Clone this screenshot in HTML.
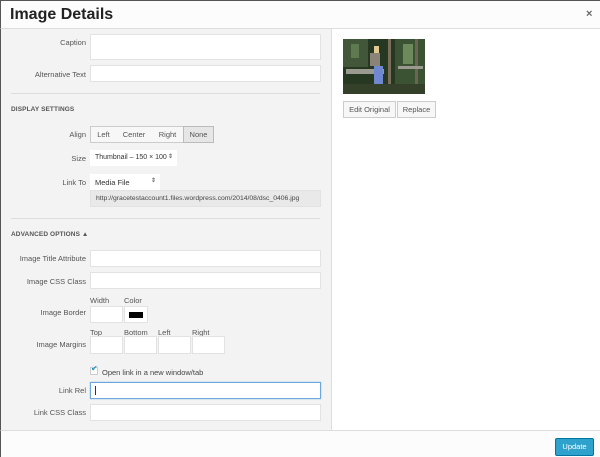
<!DOCTYPE html>
<html><head><style>
*{box-sizing:border-box;margin:0;padding:0}
body{width:600px;height:457px;overflow:hidden;font-family:"Liberation Sans",sans-serif;font-size:7.5px;color:#444;background:#fff;position:relative}
.a{position:absolute}
.hdr{left:0;top:0;width:600px;height:29px;background:#fcfcfc;border-bottom:1px solid #ddd;border-top:1px solid #555;border-left:1px solid #555}
.hdr h1{position:absolute;left:9px;top:5px;font-size:16px;font-weight:bold;color:#222}
.left{left:0;top:29px;width:332px;height:401px;background:#f3f3f3;border-right:1px solid #ddd;border-left:1px solid #555}
.lbl{position:absolute;right:514px;text-align:right;white-space:nowrap;color:#555}
.in{position:absolute;background:#fff;border:1px solid #e2e2e2;white-space:nowrap}
.hr{position:absolute;left:11px;width:309px;height:1px;background:#ddd}
.sec{position:absolute;left:11px;font-size:6.5px;font-weight:bold;color:#555;letter-spacing:.1px}
.btn{position:absolute;background:#f7f7f7;border:1px solid #ccc;text-align:center;line-height:15px;color:#555}
.sm{position:absolute;color:#555}
.foot{left:0;top:430px;width:600px;height:27px;background:#fcfcfc;border-top:1px solid #ddd;border-left:1px solid #555}
</style></head><body>
<div class="a hdr"><h1>Image Details</h1><div style="position:absolute;left:585px;top:7px;font-size:11px;font-weight:bold;color:#666">×</div></div>
<div class="a left"></div>

<div class="lbl" style="top:38px">Caption</div>
<div class="in" style="left:90px;top:34px;width:231px;height:26px"></div>
<div class="lbl" style="top:70px">Alternative Text</div>
<div class="in" style="left:90px;top:65px;width:231px;height:17px"></div>
<div class="hr" style="top:93px"></div>
<div class="sec" style="top:106px">DISPLAY SETTINGS</div>

<div class="lbl" style="top:130px">Align</div>
<div class="btn" style="left:90px;top:126px;width:27px;height:17px">Left</div>
<div class="btn" style="left:116px;top:126px;width:37px;height:17px;border-left:none">Center</div>
<div class="btn" style="left:152px;top:126px;width:32px;height:17px;border-left:none">Right</div>
<div class="btn" style="left:183px;top:126px;width:31px;height:17px;background:#e6e6e6;border-color:#bbb">None</div>

<div class="lbl" style="top:154px">Size</div>
<div class="in" style="left:90px;top:150px;width:87px;height:16px;border:none;padding:4px 5px;color:#333;font-size:7px">Thumbnail – 150 × 100<span style="position:absolute;right:4px;top:3px;font-size:6px">⇕</span></div>
<div class="lbl" style="top:178px">Link To</div>
<div class="in" style="left:90px;top:174px;width:70px;height:16px;border:none;padding:4px 5px;color:#333">Media File<span style="position:absolute;right:4px;top:3px;font-size:6px">⇕</span></div>
<div class="in" style="left:90px;top:190px;width:231px;height:17px;background:#e9e9e9;padding:4px 5px;color:#444;font-size:6.8px">http://gracetestaccount1.files.wordpress.com/2014/08/dsc_0406.jpg</div>
<div class="hr" style="top:218px"></div>

<div class="sec" style="top:231px">ADVANCED OPTIONS ▲</div>
<div class="lbl" style="top:254px">Image Title Attribute</div>
<div class="in" style="left:90px;top:250px;width:231px;height:17px"></div>
<div class="lbl" style="top:277px">Image CSS Class</div>
<div class="in" style="left:90px;top:272px;width:231px;height:17px"></div>
<div class="sm" style="left:90px;top:296px">Width</div>
<div class="sm" style="left:124px;top:296px">Color</div>
<div class="lbl" style="top:308px">Image Border</div>
<div class="in" style="left:90px;top:306px;width:33px;height:17px"></div>
<div class="in" style="left:124px;top:306px;width:24px;height:17px"><div style="position:absolute;left:4px;top:5px;width:14px;height:6px;background:#000"></div></div>
<div class="sm" style="left:90px;top:328px">Top</div>
<div class="sm" style="left:124px;top:328px">Bottom</div>
<div class="sm" style="left:158px;top:328px">Left</div>
<div class="sm" style="left:192px;top:328px">Right</div>
<div class="lbl" style="top:340px">Image Margins</div>
<div class="in" style="left:90px;top:336px;width:33px;height:18px"></div>
<div class="in" style="left:124px;top:336px;width:33px;height:18px"></div>
<div class="in" style="left:158px;top:336px;width:33px;height:18px"></div>
<div class="in" style="left:192px;top:336px;width:33px;height:18px"></div>
<div class="in" style="left:90px;top:367px;width:8px;height:8px;border-color:#ccc"></div>
<div class="a" style="left:91px;top:364px;color:#1e8cbe;font-size:8px">✔</div>
<div class="sm" style="left:102px;top:368px;color:#444">Open link in a new window/tab</div>
<div class="lbl" style="top:386px">Link Rel</div>
<div class="in" style="left:90px;top:382px;width:231px;height:17px;border-color:#6fa8dc;box-shadow:0 0 1px #6fa8dc"><div style="position:absolute;left:4px;top:3px;width:1px;height:9px;background:#333"></div></div>
<div class="lbl" style="top:408px">Link CSS Class</div>
<div class="in" style="left:90px;top:404px;width:231px;height:17px"></div>

<svg class="a" style="left:343px;top:39px" width="82" height="55" viewBox="0 0 82 55">
<rect width="82" height="55" fill="#263822"/>
<rect x="0" y="0" width="25" height="28" fill="#42573a"/>
<rect x="52" y="0" width="30" height="45" fill="#3b5233"/>
<rect x="60" y="5" width="10" height="20" fill="#6d8a5c"/>
<rect x="8" y="5" width="8" height="14" fill="#5e7a4e"/>
<rect x="45" y="0" width="3" height="55" fill="#7a6e5c"/>
<rect x="72" y="0" width="3" height="55" fill="#6b6553"/>
<rect x="3" y="30" width="38" height="5" fill="#9a9a90"/>
<rect x="55" y="27" width="25" height="3" fill="#9a9a90"/>
<rect x="27" y="14" width="10" height="13" fill="#8b8278"/>
<rect x="31" y="7" width="5" height="7" fill="#e0c890"/>
<rect x="31" y="27" width="9" height="18" fill="#7088d0"/>
<rect x="0" y="45" width="82" height="10" fill="#34402a"/>
</svg>
<div class="btn" style="left:343px;top:101px;width:53px;height:17px">Edit Original</div>
<div class="btn" style="left:397px;top:101px;width:39px;height:17px">Replace</div>

<div class="a foot"></div>
<div class="a" style="left:555px;top:438px;width:39px;height:18px;background:#2ea2cc;border:1px solid #0074a2;border-radius:2px;color:#fff;text-align:center;line-height:16px;font-size:7.5px">Update</div>
</body></html>
